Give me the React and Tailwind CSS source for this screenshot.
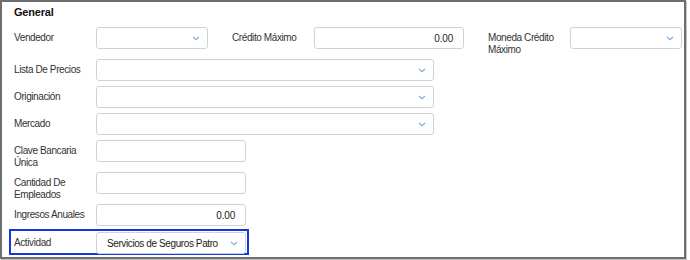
import React from "react";

const font = { fontFamily: '"Liberation Sans", Arial, sans-serif' };

function Chevron() {
  return (
    <svg width="8" height="5" viewBox="0 0 8 5" className="shrink-0">
      <path d="M1 1 L4 3.7 L7 1" fill="none" stroke="#7fabe0" strokeWidth="1.1" />
    </svg>
  );
}

function Select({ w, value }) {
  return (
    <div
      className={`${w} h-[22px] shrink-0 border border-[#d2d2d2] rounded-[3px] bg-white flex items-center justify-between pl-[10px] pr-[7px] text-[10px] tracking-[-0.4px] text-[#222]`}
    >
      <span className="truncate">{value || ""}</span>
      <Chevron />
    </div>
  );
}

function Input({ w, value }) {
  return (
    <div
      className={`${w} h-[22px] shrink-0 border border-[#d2d2d2] rounded-[3px] bg-white flex items-center justify-end pr-[10px] text-[10px] tracking-[-0.2px] text-[#222]`}
    >
      {value}
    </div>
  );
}

function Label({ children }) {
  return (
    <div className="w-[82px] shrink-0 pt-[5px] pr-2 text-[10px] leading-[12px] tracking-[-0.4px] text-[#333]">
      {children}
    </div>
  );
}

export default function App() {
  return (
    <div className="w-[690px] h-[260px] bg-white" style={font}>
      <div className="w-[686px] h-[259px] border-2 border-[#6e6e6e] shadow-[1px_1px_0_#c4c4c4] bg-white pl-[12px]">
        {/* Header */}
        <div className="pt-[3px] mb-[7px] text-[11px] leading-[15px] font-bold tracking-[-0.2px] text-[#111]">
          General
        </div>

        {/* Row 1 */}
        <div className="flex items-start h-[32px]">
          <Label>Vendedor</Label>
          <Select w="w-[112px]" />
          <div className="w-[24px] shrink-0" />
          <Label>Crédito Máximo</Label>
          <Input w="w-[150px]" value="0.00" />
          <div className="w-[24px] shrink-0" />
          <Label>
            Moneda Crédito
            <br />
            Máximo
          </Label>
          <Select w="w-[112px]" />
        </div>

        <div className="flex items-start h-[27px]">
          <Label>Lista De Precios</Label>
          <Select w="w-[338px]" />
        </div>
        <div className="flex items-start h-[27px]">
          <Label>Originación</Label>
          <Select w="w-[338px]" />
        </div>
        <div className="flex items-start h-[27px]">
          <Label>Mercado</Label>
          <Select w="w-[338px]" />
        </div>
        <div className="flex items-start h-[32px]">
          <Label>
            Clave Bancaria
            <br />
            Única
          </Label>
          <Input w="w-[150px]" />
        </div>
        <div className="flex items-start h-[32px]">
          <Label>
            Cantidad De
            <br />
            Empleados
          </Label>
          <Input w="w-[150px]" />
        </div>
        <div className="flex items-start h-[25px]">
          <Label>Ingresos Anuales</Label>
          <Input w="w-[150px]" value="0.00" />
        </div>

        {/* Actividad, highlighted */}
        <div className="-ml-[5px] w-[240px] h-[26px] border-2 border-[#1238e0] pl-[3px] pt-[1px] flex items-start">
          <Label>Actividad</Label>
          <Select w="w-[150px]" value="Servicios de Seguros Patro" />
        </div>
      </div>
    </div>
  );
}
